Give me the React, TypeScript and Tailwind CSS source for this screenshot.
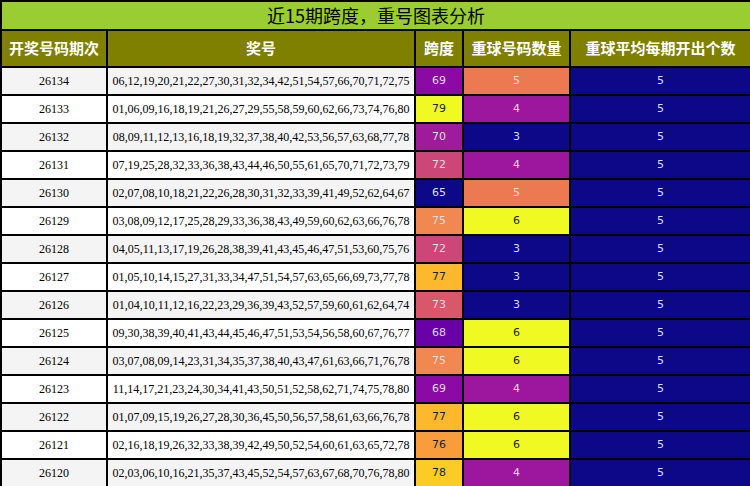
const rows: [string, string, number, number][] = [
  ["26134","06,12,19,20,21,22,27,30,31,32,34,42,51,54,57,66,70,71,72,75",69,5],
  ["26133","01,06,09,16,18,19,21,26,27,29,55,58,59,60,62,66,73,74,76,80",79,4],
  ["26132","08,09,11,12,13,16,18,19,32,37,38,40,42,53,56,57,63,68,77,78",70,3],
  ["26131","07,19,25,28,32,33,36,38,43,44,46,50,55,61,65,70,71,72,73,79",72,4],
  ["26130","02,07,08,10,18,21,22,26,28,30,31,32,33,39,41,49,52,62,64,67",65,5],
  ["26129","03,08,09,12,17,25,28,29,33,36,38,43,49,59,60,62,63,66,76,78",75,6],
  ["26128","04,05,11,13,17,19,26,28,38,39,41,43,45,46,47,51,53,60,75,76",72,3],
  ["26127","01,05,10,14,15,27,31,33,34,47,51,54,57,63,65,66,69,73,77,78",77,3],
  ["26126","01,04,10,11,12,16,22,23,29,36,39,43,52,57,59,60,61,62,64,74",73,3],
  ["26125","09,30,38,39,40,41,43,44,45,46,47,51,53,54,56,58,60,67,76,77",68,6],
  ["26124","03,07,08,09,14,23,31,34,35,37,38,40,43,47,61,63,66,71,76,78",75,6],
  ["26123","11,14,17,21,23,24,30,34,41,43,50,51,52,58,62,71,74,75,78,80",69,4],
  ["26122","01,07,09,15,19,26,27,28,30,36,45,50,56,57,58,61,63,66,76,78",77,6],
  ["26121","02,16,18,19,26,32,33,38,39,42,49,50,52,54,60,61,63,65,72,78",76,6],
  ["26120","02,03,06,10,16,21,35,37,43,45,52,54,57,63,67,68,70,76,78,80",78,4],
];
const spanCls: Record<number, string> = {
  65: "bg-[#0d0887] text-[#dddddd]",
  68: "bg-[#6a00a8] text-[#dddddd]",
  69: "bg-[#8b0aa5] text-[#dddddd]",
  70: "bg-[#a01a9c] text-[#dddddd]",
  72: "bg-[#cc4778] text-[#dddddd]",
  73: "bg-[#d8576b] text-[#dddddd]",
  75: "bg-[#f0884f] text-[#dddddd]",
  76: "bg-[#f99d3c] text-[#222222]",
  77: "bg-[#fdb82e] text-[#222222]",
  78: "bg-[#fdcb26] text-[#222222]",
  79: "bg-[#f0f921] text-[#222222]",
};
const repCls: Record<number, string> = {
  3: "bg-[#0d0887] text-[#dddddd]",
  4: "bg-[#9c179e] text-[#dddddd]",
  5: "bg-[#ed7953] text-[#dddddd]",
  6: "bg-[#f0f921] text-[#222222]",
};
export default function App() {
  return (
    <div className="w-[750px] h-[486px] bg-white overflow-hidden" style={{ fontFamily: '"Liberation Serif","Noto Sans CJK SC",serif' }}>
      <table className="border-collapse w-[750px] table-fixed text-[12px]">
        <colgroup>
          <col className="w-[106px]" /><col className="w-[308px]" /><col className="w-[48px]" /><col className="w-[107px]" /><col className="w-[181px]" />
        </colgroup>
        <thead>
          <tr className="h-[29px]">
            <th colSpan={5} className="border-2 border-black bg-[#9acd32] text-[18px] font-normal text-black text-center" style={{ fontFamily: '"Noto Sans CJK SC",sans-serif' }}>
              近15期跨度，重号图表分析
            </th>
          </tr>
          <tr className="h-[37px] bg-[#808000] text-white text-[15px] font-bold" style={{ fontFamily: '"Noto Sans CJK SC",sans-serif' }}>
            {["开奖号码期次","奖号","跨度","重球号码数量","重球平均每期开出个数"].map(h=>(
              <th key={h} className="border-2 border-black font-bold whitespace-nowrap">{h}</th>
            ))}
          </tr>
        </thead>
        <tbody>
          {rows.map((r,i)=>(
            <tr key={r[0]} className={`h-[28px] ${i%2===0?"bg-[#f4f4f4]":"bg-white"} text-center`}>
              <td className="border-2 border-black">{r[0]}</td>
              <td className="border-2 border-black whitespace-nowrap">{r[1]}</td>
              <td className={`border-2 border-black ${spanCls[r[2]]}`} style={{fontFamily:'"DejaVu Sans",sans-serif', fontSize: 11}}>{r[2]}</td>
              <td className={`border-2 border-black ${repCls[r[3]]}`} style={{fontFamily:'"DejaVu Sans",sans-serif', fontSize: 11}}>{r[3]}</td>
              <td className="border-2 border-black bg-[#0d0887] text-[#dddddd]" style={{fontFamily:'"DejaVu Sans",sans-serif', fontSize: 11}}>5</td>
            </tr>
          ))}
        </tbody>
      </table>
    </div>
  );
}
